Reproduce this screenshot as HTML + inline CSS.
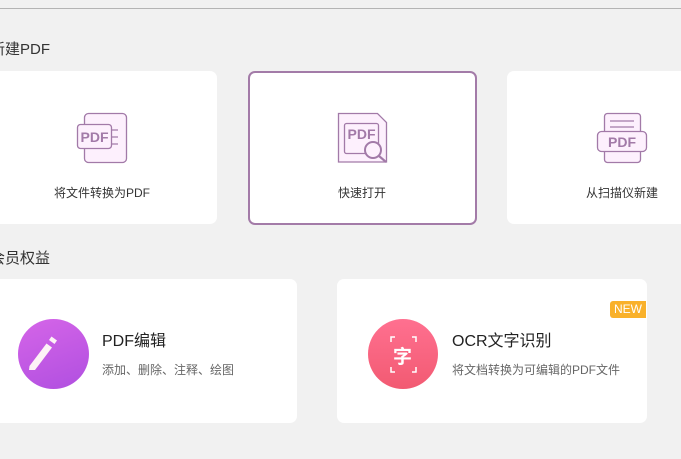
<!DOCTYPE html>
<html><head><meta charset="utf-8"><style>
*{margin:0;padding:0;box-sizing:border-box}
body{width:681px;height:459px;overflow:hidden;background:#f1f1f1;font-family:"Liberation Sans","Noto Sans CJK SC",sans-serif;position:relative;color:#333}
.line{position:absolute;left:0;top:8px;width:681px;height:1px;background:#b4b4b4}
.h{position:absolute;font-size:15px;color:#333;white-space:nowrap}
.card{position:absolute;background:#fff;border-radius:7px}
.lbl{position:absolute;font-size:12px;color:#333;white-space:nowrap;transform:translateX(-50%)}
svg{position:absolute}
.t{position:absolute;font-size:16px;color:#222;white-space:nowrap}
.s{position:absolute;font-size:12px;color:#666;white-space:nowrap}
</style></head><body>
<div class="line"></div>
<div class="h" style="left:-10px;top:38px">新建PDF</div>
<div class="card" style="left:-20px;top:71px;width:237px;height:153px"></div>
<div class="card" style="left:248px;top:71px;width:229px;height:154px;border:2px solid #a37ba8"></div>
<div class="card" style="left:507px;top:71px;width:200px;height:153px"></div>
<svg width="681" height="230" style="left:0;top:0" fill="#fdf0fd" stroke="#a27aa8" stroke-width="1.3">
<rect x="84.5" y="113.5" width="42" height="49" rx="4"/>
<rect x="77.5" y="124.5" width="34" height="24" rx="3"/>
<path d="M112 130h6M112 137h6M112 144h6" fill="none"/>
<text x="94.5" y="142" font-size="14" font-weight="bold" fill="#a27aa8" stroke="none" text-anchor="middle" font-family="Liberation Sans">PDF</text>
<path d="M338.5 113.5h39l9 9v39.5h-48z"/>
<rect x="344.5" y="123.5" width="34" height="30" rx="2" fill="#fdf0fd"/>
<text x="361.5" y="139" font-size="14" font-weight="bold" fill="#a27aa8" stroke="none" text-anchor="middle" font-family="Liberation Sans">PDF</text>
<circle cx="373" cy="150" r="8" fill="#fdf0fd" stroke-width="2"/>
<path d="M379 156l7 6" stroke-width="2.2" fill="none"/>
<rect x="604.5" y="113.5" width="36" height="22" rx="3"/>
<path d="M610 121h24M610 127h24" fill="none"/>
<rect x="604.5" y="146.5" width="36" height="16" rx="3"/>
<rect x="597.5" y="131.5" width="49" height="20" rx="4"/>
<text x="622" y="147" font-size="14" font-weight="bold" fill="#a27aa8" stroke="none" text-anchor="middle" font-family="Liberation Sans">PDF</text>
</svg>
<div class="lbl" style="left:102px;top:184px">将文件转换为PDF</div>
<div class="lbl" style="left:362px;top:184px">快速打开</div>
<div class="lbl" style="left:622px;top:184px">从扫描仪新建</div>
<div class="h" style="left:-10px;top:247px">会员权益</div>
<div class="card" style="left:-20px;top:279px;width:317px;height:144px"></div>
<div class="card" style="left:337px;top:279px;width:310px;height:144px"></div>
<div style="position:absolute;left:18px;top:319px;width:71px;height:70px;border-radius:50%;background:linear-gradient(160deg,#d565e8,#b04fe0)"></div>
<svg width="71" height="70" style="left:18px;top:319px"><path d="M11 70" /><path d="M11.5 47l17-22.5 5.5 4-17 22.5h-6z" fill="#fdf2f6"/><path d="M31 21l2.5-3.5 5.5 4-2.5 3.5z" fill="#fdf2f6"/></svg>
<div class="t" style="left:102px;top:327px">PDF编辑</div>
<div class="s" style="left:102px;top:361px">添加、删除、注释、绘图</div>
<div style="position:absolute;left:368px;top:319px;width:70px;height:70px;border-radius:50%;background:linear-gradient(180deg,#ff7090,#f25a72)"></div>
<svg width="40" height="40" style="left:383px;top:334px" fill="none" stroke="#fff" stroke-width="1.5"><path d="M12 3h-4v5M29 3h4v5M12 38h-4v-5M29 38h4v-5"/></svg>
<div style="position:absolute;left:393px;top:342px;font-size:19px;font-weight:bold;color:#fff">字</div>
<div class="t" style="left:452px;top:327px">OCR文字识别</div>
<div class="s" style="left:452px;top:361px">将文档转换为可编辑的PDF文件</div>
<div style="position:absolute;left:610px;top:301px;width:36px;height:17px;background:#f9b12b;border-radius:3px 0 0 3px;color:#fff;font-size:12px;line-height:17px;text-align:center;font-family:'Liberation Sans Narrow','Liberation Sans',sans-serif">NEW</div>
</body></html>
